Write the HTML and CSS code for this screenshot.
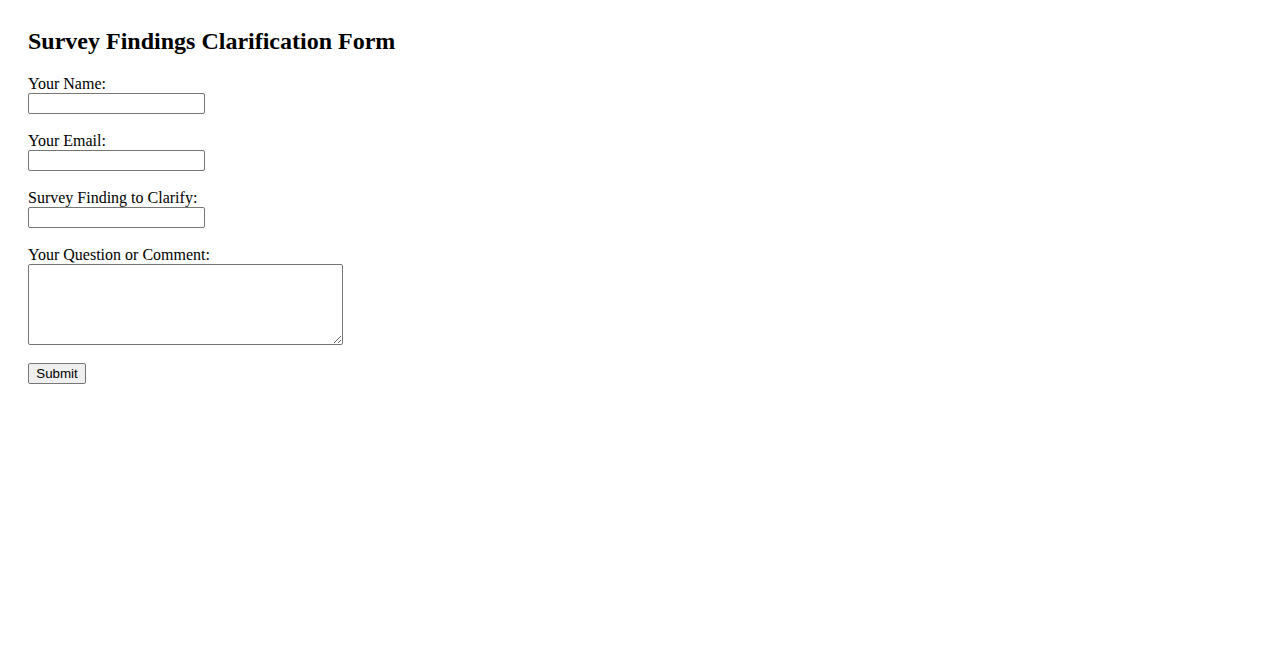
FILE: index.html
```html
<!DOCTYPE html>
<html lang="en">
<head>
<meta charset="utf-8">
<title>Survey Findings Clarification Form</title>
<link rel="stylesheet" href="styles.css">
</head>
<body>
<div class="page">
  <h2 class="title">Survey Findings Clarification Form</h2>
  <form class="form">
    <div class="group">
      <label class="label" for="name">Your Name:</label>
      <input class="field" type="text" id="name">
    </div>
    <div class="group">
      <label class="label" for="email">Your Email:</label>
      <input class="field" type="email" id="email">
    </div>
    <div class="group">
      <label class="label" for="finding">Survey Finding to Clarify:</label>
      <input class="field" type="text" id="finding">
    </div>
    <div class="group">
      <label class="label" for="comment">Your Question or Comment:</label>
      <textarea class="area" id="comment"></textarea>
    </div>
    <button class="submit" type="submit">Submit</button>
  </form>
</div>
</body>
</html>
```

FILE: styles.css
```css
html, body {
  margin: 0;
  padding: 0;
  background: #ffffff;
}
body {
  font-family: "Liberation Serif", "Times New Roman", serif;
  font-size: 16px;
  color: #000000;
}
.page {
  padding: 28px;
}
.title {
  margin: 0 0 22px 0;
  font-size: 24px;
  line-height: 26px;
  font-weight: bold;
}
.form {
  display: flex;
  flex-direction: column;
  align-items: flex-start;
}
.group {
  display: flex;
  flex-direction: column;
  align-items: flex-start;
  margin-bottom: 19px;
}
.label {
  display: block;
  line-height: 15px;
  padding-bottom: 2px;
}
.field {
  box-sizing: border-box;
  width: 177px;
  height: 21px;
  margin: 0;
  padding: 1px 2px;
  border: 1px solid #767676;
  border-radius: 2px;
  background: #ffffff;
  font-family: "Liberation Sans", Arial, sans-serif;
  font-size: 13.33px;
}
.area {
  box-sizing: border-box;
  width: 315px;
  height: 81px;
  margin: 0;
  padding: 2px;
  border: 1px solid #767676;
  border-radius: 2px;
  background: #ffffff;
  font-family: "Liberation Mono", monospace;
  font-size: 13.33px;
  resize: both;
}
.submit {
  box-sizing: border-box;
  width: 58px;
  height: 21px;
  margin: -1px 0 0 0;
  padding: 1px 6px;
  border: 1px solid #767676;
  border-radius: 2px;
  background: #efefef;
  color: #000000;
  font-family: "Liberation Sans", Arial, sans-serif;
  font-size: 13.33px;
  line-height: 15px;
}
```
